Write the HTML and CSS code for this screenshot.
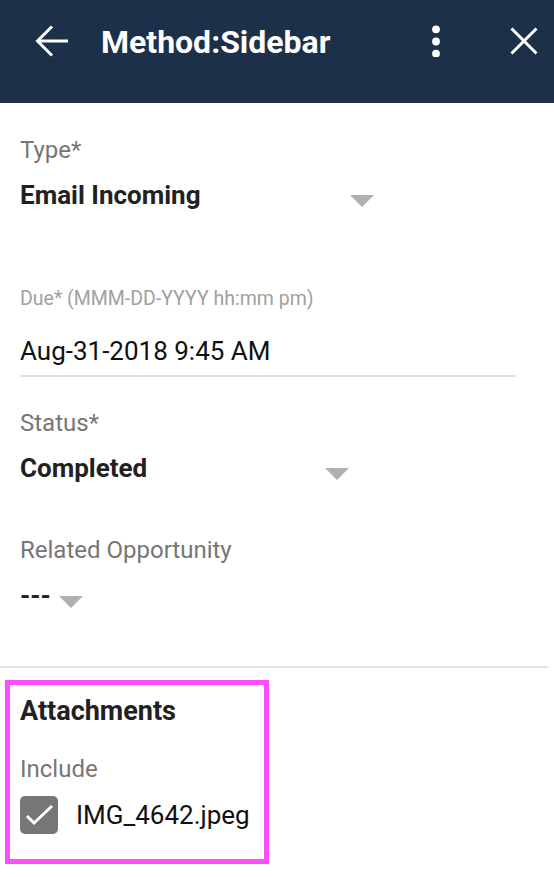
FILE: index.html
```html
<!DOCTYPE html>
<html>
<head>
<meta charset="utf-8">
<link rel="stylesheet" href="styles.css">
</head>
<body>
<header class="topbar">
  <svg class="icon-back" width="34" height="34" viewBox="0 0 34 34"><polyline points="17,2.5 2.5,17 17,31.5" fill="none" stroke="#fff" stroke-width="3"/><line x1="3" y1="17" x2="33" y2="17" stroke="#fff" stroke-width="3"/></svg>
  <h1 class="title">Method:Sidebar</h1>
  <svg class="icon-more" width="8" height="32" viewBox="0 0 8 32"><circle cx="4" cy="4.3" r="3.9" fill="#fff"/><circle cx="4" cy="16.5" r="3.9" fill="#fff"/><circle cx="4" cy="28.6" r="3.9" fill="#fff"/></svg>
  <svg class="icon-close" width="28" height="28" viewBox="0 0 28 28"><line x1="1.5" y1="1.5" x2="26.5" y2="26.5" stroke="#fff" stroke-width="3"/><line x1="26.5" y1="1.5" x2="1.5" y2="26.5" stroke="#fff" stroke-width="3"/></svg>
</header>
<main class="form">
  <div class="field field-type">
    <div class="label">Type*</div>
    <div class="select sel-type"><span class="value">Email Incoming</span><span class="caret"></span></div>
  </div>
  <div class="field field-due">
    <div class="label-small">Due* (MMM-DD-YYYY hh:mm pm)</div>
    <div class="input">Aug-31-2018 9:45 AM</div>
  </div>
  <div class="field field-status">
    <div class="label">Status*</div>
    <div class="select sel-status"><span class="value">Completed</span><span class="caret"></span></div>
  </div>
  <div class="field field-opp">
    <div class="label">Related Opportunity</div>
    <div class="select sel-opp"><span class="value">---</span><span class="caret"></span></div>
  </div>
</main>
<hr class="divider">
<section class="attachments">
  <h2 class="att-title">Attachments</h2>
  <div class="label include">Include</div>
  <label class="check-row">
    <span class="checkbox"><svg width="38" height="38" viewBox="0 0 38 38"><polyline points="7,20 14,27 32,10" fill="none" stroke="#fff" stroke-width="3"/></svg></span>
    <span class="file">IMG_4642.jpeg</span>
  </label>
</section>
</body>
</html>
```
FILE: styles.css
```css
* { box-sizing: border-box; }
html, body { margin: 0; padding: 0; background: #fff; }
body { font-family: Roboto, "Liberation Sans", Arial, sans-serif; color: #212121; width: 554px; }

.topbar {
  height: 103px;
  background: #1c3049;
  display: flex;
  align-items: flex-start;
  padding-top: 24px;
}
.icon-back { margin-left: 35px; flex: none; }
.title {
  margin: 2px 0 0 32px;
  font-size: 32px;
  line-height: 32px;
  font-weight: 700;
  color: #fff;
}
.icon-more { margin-left: auto; margin-top: 1px; flex: none; }
.icon-close { margin-left: 70px; margin-right: 16px; margin-top: 3px; flex: none; }

.form { padding-left: 20px; }
.label {
  font-size: 24px;
  line-height: 28px;
  color: #767676;
}
.label-small {
  font-size: 19.5px;
  line-height: 24px;
  color: #a0a0a0;
}
.select {
  display: flex;
  justify-content: space-between;
  align-items: flex-start;
  margin-top: 16px;
  height: 30px;
}
.value {
  font-size: 26px;
  line-height: 30px;
  font-weight: 700;
  color: #212121;
}
.caret {
  width: 0; height: 0;
  border-left: 12px solid transparent;
  border-right: 12px solid transparent;
  border-top: 12px solid #b0b0b0;
  margin-top: 15px;
}
.sel-type { width: 354px; }
.sel-status { width: 329px; }
.sel-opp { width: 63px; }

.field-type { padding-top: 33px; }
.field-due { padding-top: 77px; }
.field-status { padding-top: 32px; }
.field-opp { padding-top: 53px; }
.field-opp .select { margin-top: 17px; }

.input {
  margin-top: 25px;
  width: 496px;
  font-size: 26px;
  line-height: 30px;
  color: #111;
  padding-bottom: 9px;
  border-bottom: 2px solid #dedede;
}

.divider {
  margin: 55px 0 0 0;
  width: 548px;
  height: 2px;
  border: none;
  background: #e2e2e2;
}

.attachments {
  margin: 12px 0 0 5px;
  width: 264px;
  border: 5px solid #ff4dff;
  padding: 11px 10px 25px 10px;
}
.att-title {
  margin: 0;
  font-size: 27px;
  line-height: 30px;
  font-weight: 700;
  color: #212121;
}
.include { margin-top: 29px; }
.check-row {
  display: flex;
  align-items: center;
  margin-top: 13px;
  gap: 18px;
}
.checkbox {
  width: 38px; height: 38px;
  background: #767676;
  border-radius: 5px;
  display: block;
  flex: none;
}
.checkbox svg { display: block; }
.file {
  font-size: 26px;
  line-height: 30px;
  color: #111;
}
```
